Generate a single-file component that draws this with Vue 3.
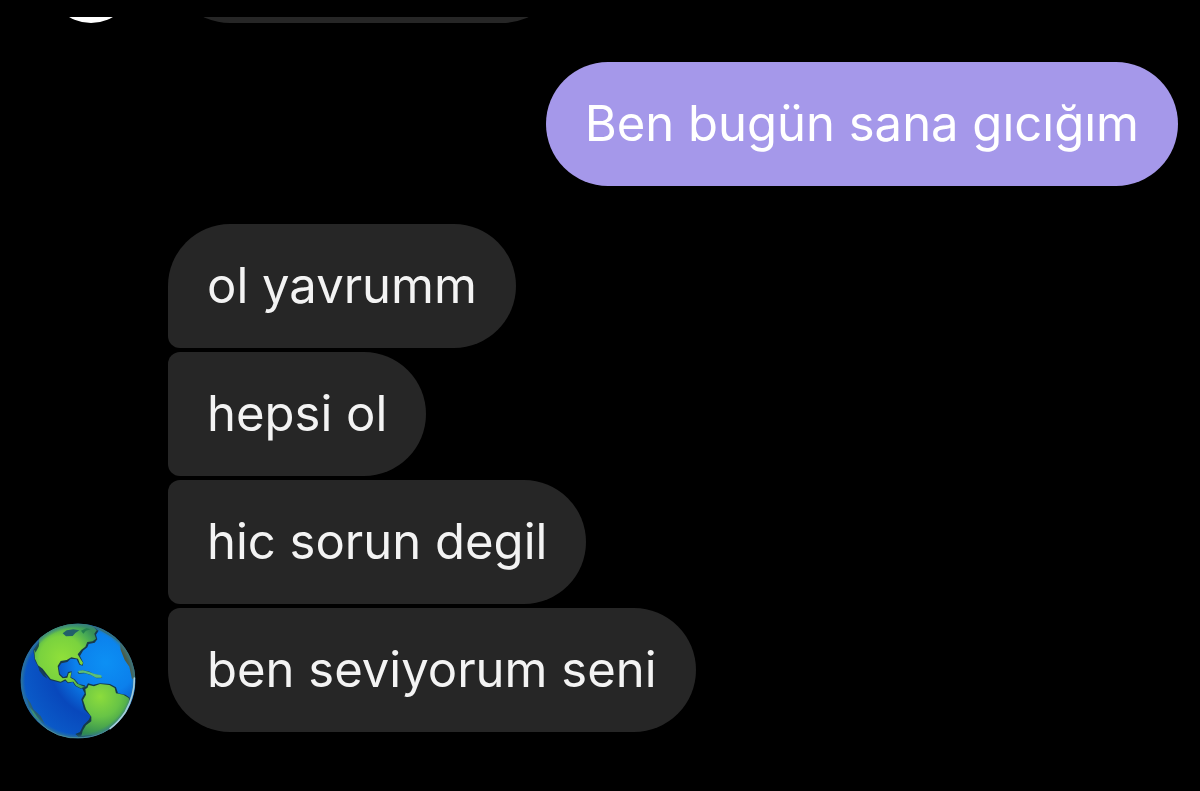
<script setup>
const incoming = [
  { id: 1, text: 'ol yavrumm', shape: 'first' },
  { id: 2, text: 'hepsi ol', shape: 'middle' },
  { id: 3, text: 'hic sorun degil', shape: 'middle' },
  { id: 4, text: 'ben seviyorum seni', shape: 'last' },
]
</script>

<template>
  <main class="chat">
    <div class="clipped" aria-hidden="true">
      <span class="reaction"></span>
      <span class="bubble-end"></span>
    </div>

    <section class="sent">
      <p class="bubble outgoing">Ben bugün sana gıcığım</p>
    </section>

    <section class="received">
      <svg class="avatar" viewBox="60 69 348 348" role="img" aria-label="Globe avatar">
        <defs>
          <radialGradient id="sea" cx="0.74" cy="0.34" r="0.75">
            <stop offset="0" stop-color="#0c90f4" />
            <stop offset="0.35" stop-color="#0b80ec" />
            <stop offset="0.65" stop-color="#0848bc" />
            <stop offset="1" stop-color="#0a5ac8" />
          </radialGradient>
          <radialGradient id="north" gradientUnits="userSpaceOnUse" cx="185" cy="175" r="120">
            <stop offset="0" stop-color="#90e03a" />
            <stop offset="0.55" stop-color="#7ad23e" />
            <stop offset="0.85" stop-color="#45a856" />
            <stop offset="1" stop-color="#378f58" />
          </radialGradient>
          <radialGradient id="south" gradientUnits="userSpaceOnUse" cx="300" cy="290" r="120">
            <stop offset="0" stop-color="#8cdc3c" />
            <stop offset="0.5" stop-color="#68c446" />
            <stop offset="1" stop-color="#2f8a52" />
          </radialGradient>
          <radialGradient id="rim" cx="0.5" cy="0.5" r="0.5">
            <stop offset="0.92" stop-color="#2f7890" stop-opacity="0" />
            <stop offset="1" stop-color="#3a7c88" stop-opacity="0.85" />
          </radialGradient>
          <clipPath id="ball"><circle cx="234" cy="243" r="172" /></clipPath>
        </defs>
        <circle cx="234" cy="243" r="172" fill="url(#sea)" />
        <g clip-path="url(#ball)" stroke-linejoin="round">
          <path
            d="M100 150 L122 118 Q160 80 215 70 Q250 66 285 82 L296 92 L288 104 L292 118 L284 128 L266 132 L262 142 L249 152 L240 168 L250 188 L248 197 L238 194 L230 178 L212 176 L202 186 L184 190 L176 202 L180 222 L190 232 L200 228 L204 216 L215 214 L213 232 L224 238 L236 252 L254 256 L258 262 L242 266 L226 258 L218 246 L204 250 L196 242 L182 248 L150 240 L138 226 L126 216 L118 206 L104 180 Z"
            fill="#173a4c" />
          <path
            d="M103 152 L116 136 L118 112 Q160 78 215 68 Q250 66 280 80 L290 91 L283 101 L288 116 L278 124 L262 126 L256 140 L244 149 L233 163 L242 178 L249 188 L246 195 L240 192 L234 176 L214 172 L200 180 L182 183 L173 198 L177 224 L188 235 L202 233 L206 220 L214 217 L211 233 L222 239 L232 251 L246 257 L256 261 L242 265 L228 257 L220 245 L204 247 L196 238 L182 245 L152 237 L140 222 L128 206 L114 196 L105 176 Z"
            fill="url(#north)" />
          <path d="M188 100 L200 91 L220 88 L238 91 L226 99 L218 108 L198 109 Z" fill="#22606a" />
          <path d="M243 92 L260 84 L272 88 L258 92 L250 101 Z" fill="#24804f" />
          <path d="M104 146 L118 126 L116 140 L106 158 Z" fill="#1c4c4c" />
          <path d="M115 198 L128 212 L142 236 L130 228 L118 212 Z" fill="#173d58" />
          <path
            d="M246 264 L258 260 L264 250 L280 254 L300 250 L330 252 L348 262 L354 280 L376 284 L394 296 L380 340 L340 390 L290 408 L236 412 L226 402 L240 396 L250 376 L266 360 L272 348 L252 328 L244 298 L254 280 Z"
            fill="#143a4a" />
          <path
            d="M256 267 L262 264 L266 255 L282 259 L300 252 L328 255 L344 264 L348 280 L370 284 L386 294 L390 306 L380 340 L336 390 L290 404 L244 408 L248 392 L258 376 L274 364 L274 350 L258 328 L249 300 L258 284 Z"
            fill="url(#south)" />
          <path d="M232 216 L246 211 L266 214 L282 222 L300 226 L307 234 L290 235 L274 226 L254 220 L236 222 Z" fill="#1d5368" />
          <path d="M234 213 L248 211 L266 215 L284 222 L304 226 L305 233 L288 233 L272 224 L252 218 L237 219 Z" fill="#5cbf78" />
          <path d="M270 76 L300 82 L340 100 L366 124 L358 128 L336 112 L306 94 Z" fill="#2c5f70" />
          <path d="M360 130 L374 122 L410 176 L410 236 L396 236 L388 200 L374 180 L362 150 Z" fill="#4c5c48" />
          <path d="M78 290 L92 310 L100 328 L122 348 L134 372 L108 350 L88 322 Z" fill="#285d74" />
          <path d="M88 322 L100 334 L112 352 L126 368 L104 352 Z" fill="#3f9d68" />
          <circle cx="234" cy="243" r="172" fill="url(#rim)" />
        </g>
        <path d="M403 234 Q404 286 376 336 Q356 366 330 386" fill="none" stroke="#a5ccdc" stroke-width="5" stroke-linecap="round" />
        <path d="M112 360 Q166 422 250 413 Q292 410 326 388" fill="none" stroke="#4c8c98" stroke-width="3" />
      </svg>
      <div class="stack">
        <p v-for="m in incoming" :key="m.id" class="bubble" :class="m.shape">{{ m.text }}</p>
      </div>
    </section>
  </main>
</template>

<style>
html,
body {
  background: #000;
}
</style>

<style scoped>
.chat {
  min-height: 100vh;
  box-sizing: border-box;
  padding: 17px 22px 52px 20px;
  background: #000;
  font-family: Inter, "Noto Sans", sans-serif;
  overflow: hidden;
}
.clipped {
  display: flex;
  align-items: flex-end;
  height: 6px;
  overflow: hidden;
  padding-left: 28px;
  gap: 34px;
}
.reaction {
  width: 86px;
  height: 86px;
  border-radius: 50%;
  background: #fff;
  flex: none;
}
.bubble-end {
  width: 396px;
  height: 124px;
  border-radius: 62px;
  background: #262626;
}
.sent {
  display: flex;
  justify-content: flex-end;
  margin-top: 39px;
}
.received {
  display: flex;
  align-items: flex-end;
  gap: 32px;
  margin-top: 38px;
}
.avatar {
  width: 116px;
  height: 116px;
  flex: none;
  margin-bottom: -7px;
}
.stack {
  display: flex;
  flex-direction: column;
  align-items: flex-start;
  gap: 4px;
}
.bubble {
  margin: 0;
  padding: 31px 39px;
  border-radius: 62px;
  background: #262626;
  color: #f3f3f3;
  font-size: 49px;
  line-height: 62px;
}
.outgoing {
  background: #a598ea;
  color: #fff;
}
.first {
  border-bottom-left-radius: 12px;
}
.middle {
  border-top-left-radius: 12px;
  border-bottom-left-radius: 12px;
}
.last {
  border-top-left-radius: 12px;
}
</style>
